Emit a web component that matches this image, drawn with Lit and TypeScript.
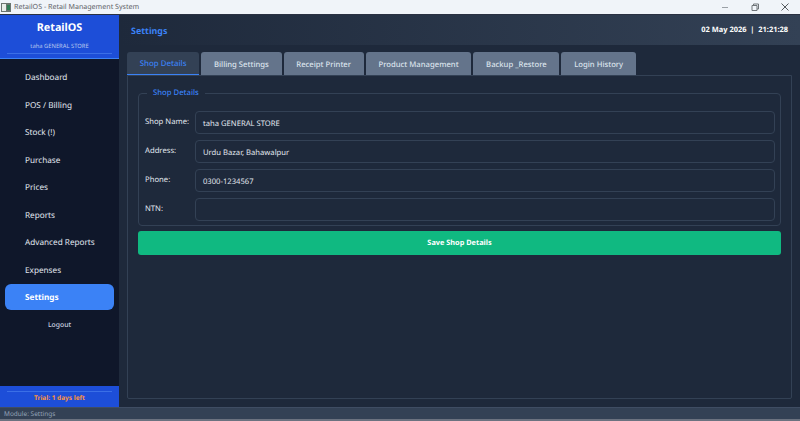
import { LitElement, html, css } from "lit";
import { customElement, state } from "lit/decorators.js";

const NAV = [
  "Dashboard",
  "POS / Billing",
  "Stock (!)",
  "Purchase",
  "Prices",
  "Reports",
  "Advanced Reports",
  "Expenses",
  "Settings",
];

const TABS = [
  "Shop Details",
  "Billing Settings",
  "Receipt Printer",
  "Product Management",
  "Backup _Restore",
  "Login History",
];

const FIELDS = [
  { label: "Shop Name:", value: "taha GENERAL STORE" },
  { label: "Address:", value: "Urdu Bazar, Bahawalpur" },
  { label: "Phone:", value: "0300-1234567" },
  { label: "NTN:", value: "" },
];

@customElement("app-root")
export class AppRoot extends LitElement {
  @state() active = "Settings";
  @state() tab = "Shop Details";

  render() {
    return html`
      <div class="titlebar">
        <svg class="app-icon" viewBox="0 0 10 9" width="10" height="9">
          <rect width="10" height="9" fill="#6b7570"></rect>
          <rect x="1" y="1" width="4" height="7" fill="#e8eeea"></rect>
          <rect x="6" y="2" width="3" height="5" fill="#2f7d55"></rect>
        </svg>
        <span class="title">RetailOS - Retail Management System</span>
        <div class="win-buttons">
          <svg viewBox="0 0 10 10" width="10" height="10">
            <path d="M2 5.5h6" stroke="#9aa0a6" fill="none"></path>
          </svg>
          <svg viewBox="0 0 10 10" width="10" height="10">
            <path
              d="M2 3.5h5v5H2zM3.5 3.5V2H8.5V7H7"
              stroke="#6f7479"
              fill="none"></path>
          </svg>
          <svg viewBox="0 0 10 10" width="10" height="10">
            <path d="M1.5 1.5l7 7M8.5 1.5l-7 7" stroke="#55595e" fill="none"></path>
          </svg>
        </div>
      </div>
      <div class="body">
        <aside class="sidebar">
          <div class="brand">
            <div class="brand-name">RetailOS</div>
            <div class="brand-shop">taha GENERAL STORE</div>
          </div>
          <nav class="nav">
            ${NAV.map(
              (item) => html`
                <div class="nav-item ${item === this.active ? "on" : ""}">${item}</div>
              `
            )}
            <div class="logout">Logout</div>
          </nav>
          <div class="trial"><span>Trial: 1 days left</span></div>
        </aside>
        <main class="main">
          <header class="header">
            <span class="page-title">Settings</span>
            <span class="clock">02 May 2026 &nbsp;|&nbsp; 21:21:28</span>
          </header>
          <div class="content">
            <div class="tabs">
              ${TABS.map(
                (t) => html`<div class="tab ${t === this.tab ? "on" : ""}">${t}</div>`
              )}
            </div>
            <section class="pane">
              <fieldset class="group">
                <legend>Shop Details</legend>
                ${FIELDS.map(
                  (f) => html`
                    <div class="row">
                      <label>${f.label}</label>
                      <div class="input">${f.value}</div>
                    </div>
                  `
                )}
              </fieldset>
              <button class="save">Save Shop Details</button>
            </section>
          </div>
        </main>
      </div>
      <footer class="status">Module: Settings</footer>
    `;
  }

  static styles = css`
    :host {
      display: flex;
      flex-direction: column;
      width: 800px;
      height: 421px;
      overflow: hidden;
      background: #1e293b;
      color: #e2e8f0;
      font-family: "Noto Sans", "Open Sans", sans-serif;
      font-size: 8px;
      text-rendering: geometricPrecision;
    }

    .titlebar {
      display: flex;
      align-items: center;
      flex: 0 0 15px;
      box-sizing: border-box;
      padding-left: 1px;
      background: #f0f4f9;
      border-bottom: 1px solid #2a3142;
    }

    .app-icon {
      margin-right: 3px;
    }

    .title {
      color: #5f6368;
      font-size: 7.1px;
    }

    .win-buttons {
      display: flex;
      gap: 20px;
      margin-left: auto;
      margin-right: 10px;
    }

    .body {
      display: flex;
      flex: 1;
      min-height: 0;
    }

    .sidebar {
      display: flex;
      flex-direction: column;
      flex: 0 0 119px;
      background: #0f172a;
    }

    .brand {
      box-sizing: border-box;
      height: 44px;
      padding: 5px 7px 0;
      background: #1d4ed8;
      border-bottom: 1px solid #3b82f6;
      text-align: center;
    }

    .brand-name {
      color: #fff;
      font-size: 10.8px;
      font-weight: 700;
      line-height: 16px;
    }

    .brand-shop {
      margin-top: 5px;
      padding-bottom: 2px;
      border-bottom: 1px solid #3b6fe6;
      color: #b9c8ee;
      font-size: 5.8px;
      line-height: 10px;
    }

    .nav {
      display: flex;
      flex-direction: column;
      flex: 1;
      gap: 1.5px;
      padding: 5px 5px 0;
    }

    .nav-item {
      display: flex;
      align-items: center;
      box-sizing: border-box;
      height: 26px;
      padding: 1px 0 0 20px;
      border-radius: 6px;
      color: #e2e8f0;
      font-size: 8.2px;
    }

    .nav-item.on {
      background: #3b82f6;
      color: #fff;
      font-weight: 700;
    }

    .logout {
      margin-top: 7px;
      color: #cbd5e1;
      font-size: 6.8px;
      font-weight: 500;
      line-height: 12px;
      text-align: center;
    }

    .trial {
      box-sizing: border-box;
      height: 21px;
      padding: 5px 7px 0;
      background: #1d4ed8;
      color: #fb923c;
      font-size: 6.5px;
      font-weight: 700;
      text-align: center;
    }

    .trial span {
      display: block;
      border-top: 1px solid #3b6fe6;
      line-height: 11px;
    }

    .main {
      display: flex;
      flex-direction: column;
      flex: 1;
      min-width: 0;
    }

    .header {
      display: flex;
      align-items: center;
      justify-content: space-between;
      flex: 0 0 30px;
      padding: 0 12px;
      box-sizing: border-box;
      background: linear-gradient(90deg, #1e293b, #334155);
    }

    .page-title {
      color: #3b82f6;
      font-size: 8.9px;
      font-weight: 700;
    }

    .clock {
      color: #fff;
      font-size: 7.45px;
      font-weight: 700;
    }

    .content {
      display: flex;
      flex-direction: column;
      flex: 1;
      padding: 7px 8px 8px;
      min-height: 0;
    }

    .tabs {
      display: flex;
      flex: 0 0 23px;
      gap: 2px;
    }

    .tab {
      display: flex;
      align-items: center;
      justify-content: center;
      box-sizing: border-box;
      padding: 2px 12.75px 0;
      border-radius: 3px 3px 0 0;
      background: #64748b;
      color: #dbe3ec;
      font-size: 7.7px;
      font-weight: 500;
    }

    .tab.on {
      background: #334155;
      border-bottom: 1px solid #3b82f6;
      color: #3b82f6;
      font-size: 7.85px;
    }

    .pane {
      display: flex;
      flex-direction: column;
      flex: 1;
      gap: 5px;
      padding: 11px 10px 0;
      border: 1px solid #334155;
      border-radius: 0 0 2px 2px;
    }

    .group {
      display: flex;
      flex-direction: column;
      gap: 6px;
      margin: 0;
      min-width: 0;
      padding: 12px 5px 4px 5px;
      border: 1px solid #334155;
      border-radius: 4px;
    }

    .group legend {
      margin-left: 3px;
      padding: 0 6px;
      color: #3b82f6;
      font-size: 7.7px;
      font-weight: 500;
      line-height: 12px;
    }

    .row {
      display: flex;
      align-items: center;
    }

    .row label {
      flex: 0 0 50px;
      margin: -2px 0 0 1px;
      color: #e2e8f0;
      font-size: 7.7px;
    }

    .input {
      display: flex;
      align-items: center;
      flex: 1;
      box-sizing: border-box;
      height: 23px;
      padding: 2px 7px 0;
      border: 1px solid #334155;
      border-radius: 4px;
      color: #e2e8f0;
      font-size: 7.65px;
    }

    .save {
      flex: 0 0 24px;
      padding: 0;
      border: 0;
      border-radius: 3px;
      background: #10b981;
      color: #fff;
      text-rendering: geometricPrecision;
      font: 700 7.35px "Noto Sans", "Open Sans", sans-serif;
    }

    .status {
      flex: 0 0 14px;
      box-sizing: border-box;
      padding-left: 4px;
      background: #334155;
      border-top: 1px solid #3f4d63;
      border-bottom: 2px solid #6b7280;
      color: #94a3b8;
      font-size: 6.5px;
      line-height: 11px;
    }
  `;
}
